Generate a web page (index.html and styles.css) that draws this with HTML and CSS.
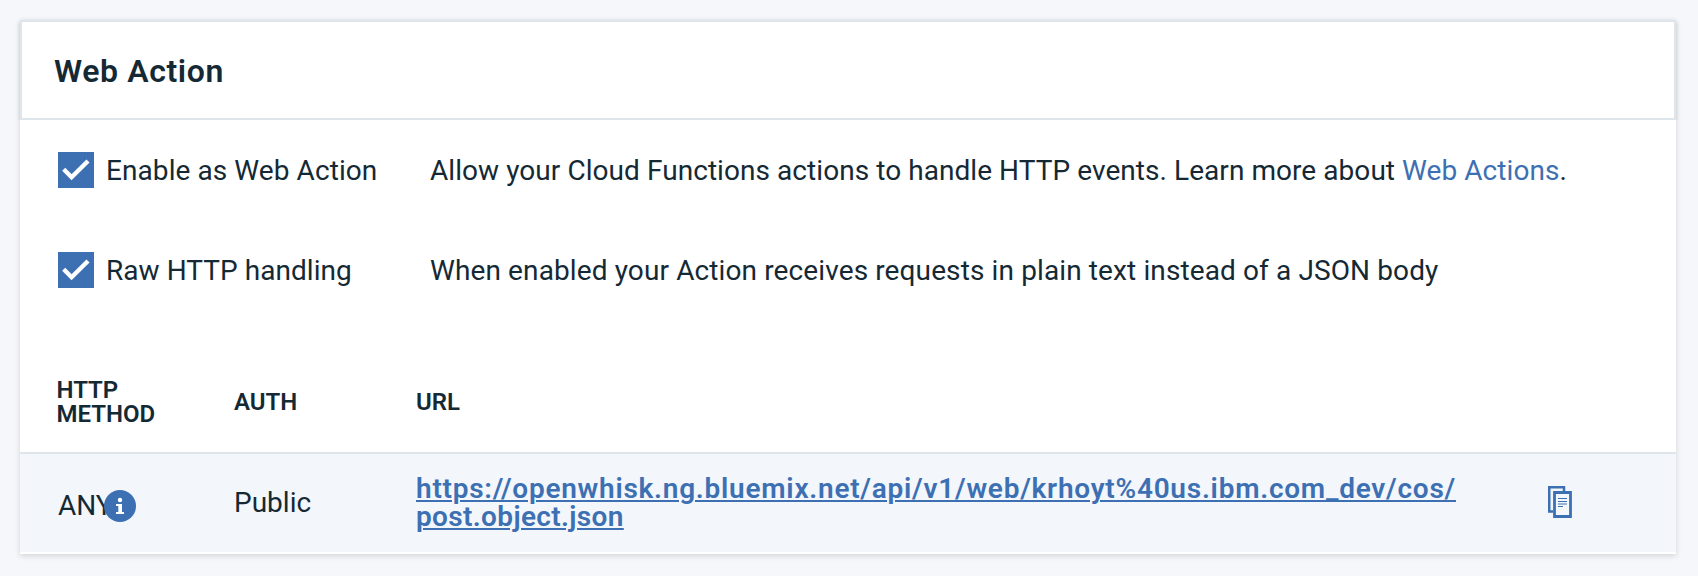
FILE: index.html
```
<!DOCTYPE html>
<html lang="en">
<head>
<meta charset="utf-8">
<title>Web Action</title>
<link rel="stylesheet" href="styles.css">
</head>
<body>
<main class="card">
  <header class="card-header"><h1 class="title">Web Action</h1></header>
  <section class="options">
    <div class="option">
      <svg class="checkbox" viewBox="0 0 36 36"><path d="M5.700 17.200l7.900 8L30 9" fill="none" stroke="#fff" stroke-width="4.400"/></svg>
      <span class="option-label label-enable">Enable as Web Action</span>
      <p class="option-text text-enable">Allow your Cloud Functions actions to handle HTTP events. Learn more about <a class="link" href="#">Web Actions</a>.</p>
    </div>
    <div class="option">
      <svg class="checkbox" viewBox="0 0 36 36"><path d="M5.700 17.200l7.900 8L30 9" fill="none" stroke="#fff" stroke-width="4.400"/></svg>
      <span class="option-label label-raw">Raw HTTP handling</span>
      <p class="option-text text-raw">When enabled your Action receives requests in plain text instead of a JSON body</p>
    </div>
  </section>
  <section class="table">
    <div class="row head">
      <div class="head-cell">HTTP<br>METHOD</div>
      <div class="head-cell auth-head">AUTH</div>
      <div>URL</div>
    </div>
    <div class="row body">
      <div class="method"><span class="any">ANY</span>
        <svg class="info" viewBox="0 0 32 32"><circle cx="16" cy="16" r="16" fill="#3d70b2"/><circle cx="16" cy="10" r="2.2" fill="#fff"/><path d="M12 14h6v8h2v2h-8v-2h2.300v-6H12z" fill="#fff"/></svg>
      </div>
      <div class="auth">Public</div>
      <a class="url" href="#"><span class="url-base">https://openwhisk.ng.bluemix.net/api/v1/web/krhoyt%40us.ibm.com_dev/cos/</span><br><span class="url-file">post.object.json</span></a>
      <svg class="copy" viewBox="0 0 24 32"><path d="M5 25.500H1.250V1.250H16V5" fill="none" stroke="#3d70b2" stroke-width="2.500"/><path d="M6.500 6.500h16v24h-16z" fill="none" stroke="#3d70b2" stroke-width="2.800"/><path d="M10 12.500h9M10 15.500h9M10 18h9M10 20.500h5" stroke="#3d70b2" stroke-width="1.200"/></svg>
    </div>
  </section>
</main>
</body>
</html>
```
FILE: styles.css
```
* { box-sizing: border-box; }
body {
  margin: 0;
  padding: 20px 22px 22px 20px;
  height: 576px;
  background: #f5f7fb;
  color: #152935;
  font: 400 28px/36px Roboto, "Open Sans", sans-serif;
}
.card { height: 534px; background: #fff; box-shadow: 0 2px 6px rgba(0, 0, 0, .14); }
.card-header {
  height: 100px;
  padding: 1px 32px 0;
  display: flex;
  align-items: center;
  border: 2px solid #dfe6eb;
  box-shadow: 0 1px 4px rgba(0, 0, 0, .12);
  clip-path: inset(-6px -6px 0 -6px);
}
.title { margin: 0; font-size: 32px; font-weight: 600; line-height: 40px; letter-spacing: .6px; }
.options { padding: 32px 38px 0; display: grid; gap: 64px; }
.option { display: grid; grid-template-columns: 36px 320px 1fr; height: 36px; line-height: 38px; white-space: nowrap; }
.checkbox { width: 36px; height: 36px; background: #3d70b2; }
.option-label { padding-left: 12px; }
.label-enable { letter-spacing: .08px; }
.label-raw { letter-spacing: .05px; }
.option-text { margin: 0; padding-left: 16px; }
.text-enable { letter-spacing: .06px; }
.text-raw { letter-spacing: .115px; }
.link { color: #3d70b2; text-decoration: none; }
.table { padding-top: 64px; }
.row { display: grid; grid-template-columns: 177px 181px 1132px 24px; padding-left: 38px; align-items: center; }
.head { height: 102px; border-bottom: 2px solid #dfe6eb; font-size: 24px; line-height: 24px; font-weight: 600; white-space: nowrap; }
.head-cell { margin-left: -1.5px; }
.auth-head { margin-left: -1px; }
.body { height: 98px; line-height: 28px; background: #f3f6fb; }
.method { display: flex; position: relative; align-items: center; height: 32px; margin-top: 6px; }
.info { position: absolute; left: 46px; top: 0; width: 32px; height: 32px; }
.auth { margin-left: -1px; }
.url { color: #3d70b2; font-weight: 600; white-space: nowrap; text-decoration: underline; text-decoration-thickness: 2px; text-underline-offset: 2px; }
.url-base { letter-spacing: .75px; }
.url-file { letter-spacing: .35px; }
.copy { width: 24px; height: 32px; margin-top: -2px; }
```
